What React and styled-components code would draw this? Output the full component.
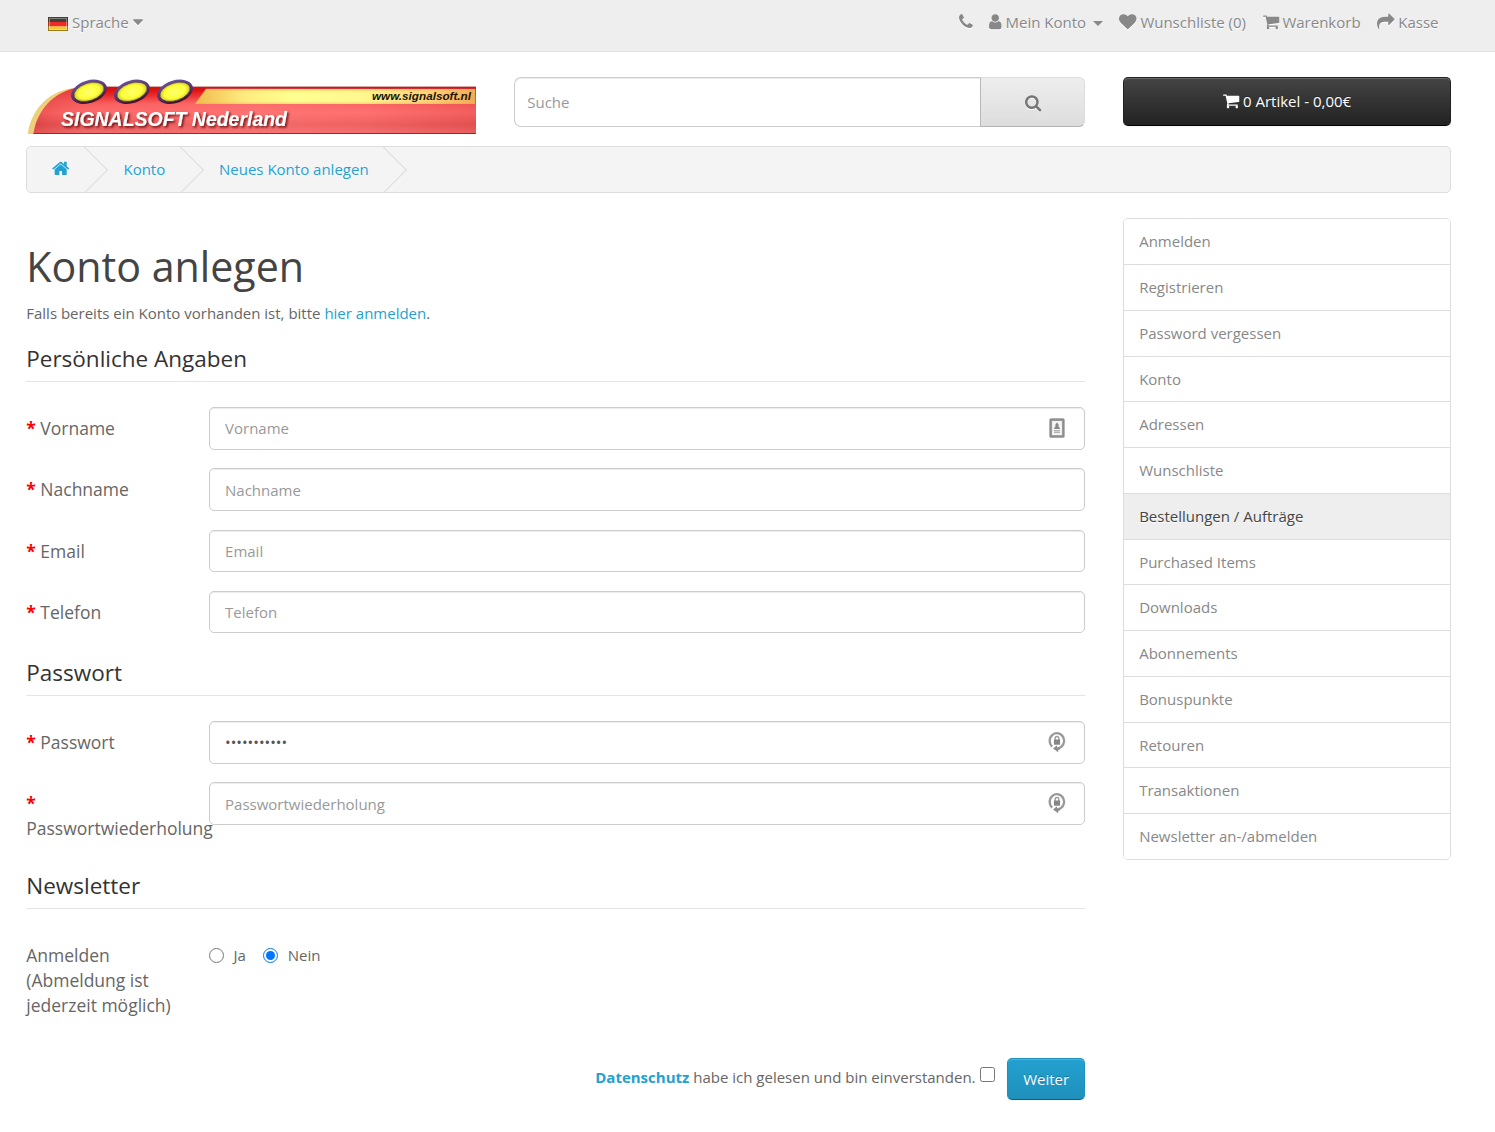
import React, { useState } from "react";
import styled, { createGlobalStyle, css } from "styled-components";

const GlobalStyle = createGlobalStyle`
  * {
    box-sizing: border-box;
  }

  body {
    margin: 0;
    background: #fff;
    color: #666;
    font-family: "Open Sans", sans-serif;
    font-size: 15px;
    line-height: 21.4px;
  }

  a {
    color: #23a1d1;
    text-decoration: none;
  }
`;

/* Glyphs on a 1792 grid: [left edge, advance width, path] */
const glyphs = {
  phone: [192, 1408, "M1600 1240q0 27-10 70.5t-21 68.5q-21 50-122 106-94 51-186 51-27 0-53-3.5t-57.5-12.5-47-14.5-55.5-20.5-49-18q-98-35-175-83-127-79-264-216t-216-264q-48-77-83-175-3-9-18-49t-20.5-55.5-14.5-47-12.5-57.5-3.5-53q0-92 51-186 56-101 106-122 25-11 68.5-21t70.5-10q14 0 21 3 18 6 53 76 11 19 30 54t35 63.5 31 53.5q3 4 17.5 25t21.5 35.5 7 28.5q0 20-28.5 50t-62 55-62 53-28.5 46q0 9 5 22.5t8.5 20.5 14 24 11.5 19q76 137 174 235t235 174q2 1 19 11.5t24 14 20.5 8.5 22.5 5q18 0 46-28.5t53-62 55-62 50-28.5q14 0 28.5 7t35.5 21.5 25 17.5q25 15 53.5 31t63.5 35 54 30q70 35 76 53 3 7 3 21z"],
  user: [256, 1280, "M1536 1399q0 109-62.5 187t-150.5 78h-854q-88 0-150.5-78t-62.5-187q0-85 8.5-160.5t31.5-152 58.5-131 94-89 134.5-34.5q131 128 313 128t313-128q76 0 134.5 34.5t94 89 58.5 131 31.5 152 8.5 160.5zm-256-887q0 159-112.5 271.5t-271.5 112.5-271.5-112.5-112.5-271.5 112.5-271.5 271.5-112.5 271.5 112.5 112.5 271.5z"],
  heart: [0, 1792, "M896 1664q-26 0-44-18l-624-602q-10-8-27.5-26t-55.5-65.5-68-97.5-53.5-121-23.5-138q0-220 127-344t351-124q62 0 126.5 21.5t120 58 95.5 68.5 76 68q36-36 76-68t95.5-68.5 120-58 126.5-21.5q224 0 351 124t127 344q0 221-229 450l-623 600q-18 18-44 18z"],
  cart: [64, 1664, "M704 1536q0 52-38 90t-90 38-90-38-38-90 38-90 90-38 90 38 38 90zm896 0q0 52-38 90t-90 38-90-38-38-90 38-90 90-38 90 38 38 90zm128-1088v512q0 24-16.5 42.5t-40.5 21.5l-1044 122q13 60 13 70 0 16-24 64h920q26 0 45 19t19 45-19 45-45 19h-1024q-26 0-45-19t-19-45q0-11 8-31.5t16-36 21.5-40 15.5-29.5l-177-823h-204q-26 0-45-19t-19-45 19-45 45-19h256q16 0 28.5 6.5t19.5 15.5 13 24.5 8 26 5.5 29.5 4.5 26h1201q26 0 45 19t19 45z"],
  share: [0, 1792, "M1792 640q0 26-19 45l-512 512q-19 19-45 19t-45-19-19-45v-256h-224q-98 0-175.5 6t-154 21.5-133 42.5-105.5 69.5-80 101-48.5 138.5-17.5 181q0 55 5 123 0 6 2.5 23.5t2.5 26.5q0 15-8.5 25t-23.5 10q-16 0-28-17-7-9-13-22t-13.5-30-10.5-24q-127-285-127-451 0-199 53-333 162-403 875-403h224v-256q0-26 19-45t45-19 45 19l512 512q19 19 19 45z"],
  search: [64, 1664, "M1216 832q0-185-131.5-316.5t-316.5-131.5-316.5 131.5-131.5 316.5 131.5 316.5 316.5 131.5 316.5-131.5 131.5-316.5zm512 832q0 52-38 90t-90 38q-54 0-90-38l-343-342q-179 124-399 124-143 0-273.5-55.5t-225-150-150-225-55.5-273.5 55.5-273.5 150-225 225-150 273.5-55.5 273.5 55.5 225 150 150 225 55.5 273.5q0 220-124 399l343 343q37 37 37 90z"],
  home: [64, 1664, "M1472 992v480q0 26-19 45t-45 19h-384v-384h-256v384h-384q-26 0-45-19t-19-45v-480q0-1 .5-3t.5-3l575-474 575 474q1 2 1 6zm223-69l-62 74q-8 9-21 11h-3q-13 0-21-7l-692-577-692 577q-12 8-24 7-13-2-21-11l-62-74q-8-10-7-23.5t11-21.5l719-599q32-26 76-26t76 26l244 204v-195q0-14 9-23t23-9h192q14 0 23 9t9 23v408l219 182q10 8 11 21.5t-7 23.5z"],
  caret: [384, 1024, "M1408 704q0 26-19 45l-448 448q-19 19-45 19t-45-19l-448-448q-19-19-19-45t19-45 45-19h896q26 0 45 19t19 45z"],
};

const Glyph = styled.svg`
  display: block;
  flex: none;
  fill: currentColor;
  overflow: visible;
  filter: ${(p) => (p.$flat ? "none" : "drop-shadow(0 1px 0 #fff)")};
`;

const Icon = ({ name, size = 17.5, flat }) => {
  const [left, advance, path] = glyphs[name];
  return (
    <Glyph
      $flat={flat}
      width={(size * advance) / 1792}
      height={size}
      viewBox={`${left} 0 ${advance} 1792`}
    >
      <path d={path} />
    </Glyph>
  );
};

const TopBar = styled.nav`
  height: 52px;
  background: #eee;
  border-bottom: 1px solid #e2e2e2;
`;

const Container = styled.div`
  width: 1462.5px;
  margin-left: 7.5px;
  padding: 0 18.75px;
`;

const TopInner = styled(Container)`
  display: flex;
  justify-content: space-between;
  padding: 11px 31.5px 0 40.5px;
  line-height: 22px;
  color: #888;
  text-shadow: 0 1px #fff;
`;

const TopLinks = styled.div`
  display: flex;
  gap: 16.6px;
`;

const TopLink = styled.a`
  display: flex;
  align-items: center;
  gap: ${(p) => p.$gap || 3.6}px;
  height: 22px;
  color: #888;
`;

const Flag = styled.svg`
  display: block;
  margin-top: 3px;
`;

const MenuCaret = styled.span`
  margin: 2px 0 0 3px;
  border-top: 5px solid;
  border-left: 5px solid transparent;
  border-right: 5px solid transparent;
`;

const Header = styled(Container)`
  display: flex;
  padding-top: 25px;
  height: 94px;
`;

const LogoBox = styled.div`
  width: 487.5px;
`;

const SearchBox = styled.div`
  display: flex;
  width: 571.4px;
  height: 50px;
`;

const SearchInput = styled.input`
  flex: 1;
  min-width: 0;
  height: 50px;
  padding: 0 12.5px;
  font: 15px "Open Sans", sans-serif;
  color: #555;
  border: 1px solid #ccc;
  border-right: 0;
  border-radius: 7px 0 0 7px;
  box-shadow: inset 0 1px 1px rgba(0, 0, 0, 0.075);
  outline: none;

  &::placeholder {
    color: #999;
  }
`;

const SearchButton = styled.button`
  display: flex;
  align-items: center;
  justify-content: center;
  width: 105px;
  height: 50px;
  padding: 2px 0 0;
  color: #777;
  background: linear-gradient(#eee, #ddd);
  border: 1px solid;
  border-color: #ddd #ddd #b3b3b3 #b8b8b8;
  border-radius: 0 6px 6px 0;
`;

const CartButton = styled.button`
  display: flex;
  align-items: center;
  justify-content: center;
  gap: 3.5px;
  width: 328.1px;
  height: 49px;
  margin-left: 38px;
  padding: 0 0 2px;
  color: #fff;
  font: 15px "Open Sans", sans-serif;
  background: linear-gradient(#444, #222);
  border: 1px solid;
  border-color: #222 #222 #040404;
  border-radius: 5px;
  box-shadow: inset 0 1px 0 rgba(255, 255, 255, 0.2), 0 1px 2px rgba(0, 0, 0, 0.05);
  text-shadow: 0 -1px 0 rgba(0, 0, 0, 0.25);
`;

const Breadcrumb = styled.ul`
  display: flex;
  gap: 3.8px;
  height: 47px;
  margin: 0;
  padding: 0;
  list-style: none;
  overflow: hidden;
  background: #f4f4f4;
  border: 1px solid #ddd;
  border-radius: 5px;
`;

const Crumb = styled.li`
  position: relative;
  display: flex;
  align-items: center;
  padding: 0 25px;
  text-shadow: 0 1px #fff;

  svg {
    margin-bottom: 2px;
  }

  /* Arrow between two crumbs */
  &::after {
    content: "";
    position: absolute;
    top: 6.3px;
    right: -6.5px;
    width: 33px;
    height: 33px;
    border-top: 1px solid #ddd;
    border-right: 1px solid #ddd;
    transform: rotate(45deg);
  }
`;

const Columns = styled.div`
  display: flex;
  gap: 38px;
  padding-top: 25.3px;
`;

const Content = styled.main`
  width: 1058.9px;
`;

const Title = styled.h1`
  margin: 24.9px 0 14px;
  font-size: 41.2px;
  font-weight: 400;
  line-height: 46px;
  color: #444;
`;

const Intro = styled.p`
  margin: 0 0 15.8px;
`;

const Fieldset = styled.fieldset`
  margin: 0;
  padding: 0;
  border: 0;
  height: ${(p) => p.$height}px;
`;

const Legend = styled.div`
  height: 42px;
  margin-bottom: 24.7px;
  padding-top: 3px;
  font-size: 22.5px;
  line-height: 32px;
  color: #333;
  border-bottom: 1px solid #e5e5e5;
`;

const FormGroup = styled.div`
  display: flex;
  height: 42.5px;
  margin-bottom: 18.75px;
`;

const Label = styled.label`
  flex: none;
  width: 182.8px;
  padding: 9px 37px 0 0;
  font-size: 17.5px;
  line-height: 25px;

  ${(p) =>
    p.$required &&
    css`
      &::before {
        content: "* ";
        color: #f00;
        font-weight: 700;
      }
    `}
`;

const Field = styled.div`
  position: relative;
  flex: 1;
`;

const TextInput = styled.input`
  display: block;
  width: 100%;
  height: 42.5px;
  padding: 0 15px;
  font: 15px "Open Sans", sans-serif;
  color: #555;
  background: #fff;
  border: 1px solid #ccc;
  border-radius: 5px;
  box-shadow: inset 0 1px 1px rgba(0, 0, 0, 0.075);
  outline: none;

  &::placeholder {
    color: #999;
  }
`;

const FieldIcon = styled.svg`
  position: absolute;
  top: 10px;
  right: 17px;
`;

const Options = styled.div`
  display: flex;
  align-items: center;
  height: 43px;
`;

const Option = styled.label`
  display: flex;
  align-items: center;
  gap: 9.5px;
  margin-right: 17.4px;
`;

const Radio = styled.input`
  width: 15px;
  height: 15px;
  margin: 0;
`;

const Actions = styled.div`
  display: flex;
  justify-content: flex-end;
  height: 42.5px;
  line-height: 39px;
`;

const Checkbox = styled.input`
  width: 15px;
  height: 15px;
  margin: 9px 12px 0 4.6px;
`;

const SubmitButton = styled.button`
  width: 78px;
  height: 42px;
  padding: 0 0 1.5px;
  color: #fff;
  font: 15px "Open Sans", sans-serif;
  background: linear-gradient(#23a1d1, #1f90bb);
  border: 1px solid;
  border-color: #1f90bb #1f90bb #145e7a;
  border-radius: 5px;
  box-shadow: inset 0 1px 0 rgba(255, 255, 255, 0.2), 0 1px 2px rgba(0, 0, 0, 0.05);
  text-shadow: 0 -1px 0 rgba(0, 0, 0, 0.25);
`;

const Sidebar = styled.aside`
  width: 328.1px;
  height: 642px;
  border: 1px solid #ddd;
  border-radius: 5px;
  overflow: hidden;
`;

const SideLink = styled.a`
  display: block;
  height: 45.77px;
  padding: 12px 15px;
  color: ${(p) => (p.$active ? "#444" : "#888")};
  background: ${(p) => (p.$active ? "#eee" : "#fff")};
  text-shadow: ${(p) => (p.$active ? "0 1px #fff" : "none")};
  border-bottom: 1px solid #ddd;

  &:last-child {
    border-bottom: 0;
  }
`;

const Logo = () => (
  <svg width="450" height="58" viewBox="0 0 450 58">
    <defs>
      <linearGradient id="body" x1="0" y1="0" x2="0" y2="1">
        <stop offset="0" stopColor="#e23030" />
        <stop offset="0.3" stopColor="#f65a5a" />
        <stop offset="0.55" stopColor="#ff6c6c" />
        <stop offset="0.8" stopColor="#e65656" />
        <stop offset="1" stopColor="#f07070" />
      </linearGradient>
      <linearGradient id="glow" x1="0" y1="0" x2="1" y2="0">
        <stop offset="0" stopColor="#c82020" stopOpacity="0.35" />
        <stop offset="0.15" stopColor="#ff7070" stopOpacity="0.1" />
        <stop offset="0.5" stopColor="#ff7a7a" stopOpacity="0.55" />
        <stop offset="0.75" stopColor="#ff7a7a" stopOpacity="0.3" />
        <stop offset="1" stopColor="#d84040" stopOpacity="0.3" />
      </linearGradient>
      <linearGradient id="crimson" x1="0" y1="0" x2="0" y2="1">
        <stop offset="0" stopColor="#e00000" />
        <stop offset="1" stopColor="#e81010" stopOpacity="0" />
      </linearGradient>
      <linearGradient id="gold" x1="0" y1="0" x2="1" y2="0">
        <stop offset="0" stopColor="#f0b94c" />
        <stop offset="0.18" stopColor="#ffec80" />
        <stop offset="0.35" stopColor="#ffff90" />
        <stop offset="0.6" stopColor="#fff890" />
        <stop offset="0.85" stopColor="#ffcf78" />
        <stop offset="1" stopColor="#f5a653" />
      </linearGradient>
      <linearGradient id="goldShade" x1="0" y1="0" x2="0" y2="1">
        <stop offset="0" stopColor="#f0a840" stopOpacity="0.45" />
        <stop offset="0.3" stopColor="#ffe070" stopOpacity="0" />
        <stop offset="0.75" stopColor="#ffe070" stopOpacity="0" />
        <stop offset="1" stopColor="#d8a040" stopOpacity="0.4" />
      </linearGradient>
      <linearGradient id="rim" x1="0" y1="0" x2="0" y2="1">
        <stop offset="0" stopColor="#6a50a0" />
        <stop offset="0.6" stopColor="#55306a" />
        <stop offset="1" stopColor="#401020" />
      </linearGradient>
      <radialGradient id="lamp">
        <stop offset="0" stopColor="#ffff70" />
        <stop offset="0.7" stopColor="#ffff38" />
        <stop offset="1" stopColor="#cfc638" />
      </radialGradient>
      <filter id="shadow" x="-10%" y="-10%" width="120%" height="150%">
        <feDropShadow dx="1.6" dy="1.6" stdDeviation="0.9" floodColor="#500" floodOpacity="0.85" />
      </filter>
    </defs>
    <path d="M1.8 57C4 36 20 14 48 11L60 16L16 57Z" fill="#edcf7c" />
    <path d="M7.5 57C10 36 26 13 56 10H450V57Z" fill="url(#body)" />
    <path d="M7.5 57C10 36 26 13 56 10H450V57Z" fill="url(#glow)" />
    <path d="M52 10H181L169 27H60Z" fill="url(#crimson)" />
    <path d="M52 9.5H450" stroke="#d09090" strokeWidth="0.8" />
    <path d="M52 10.8H450" stroke="#cc1818" strokeWidth="1.6" />
    <path d="M7.5 56.5H450" stroke="#c01818" strokeWidth="1.2" />
    <path d="M180 12H449V27H169Z" fill="url(#gold)" />
    <path d="M180 12H449V27H169Z" fill="url(#goldShade)" />
    {[63, 106, 149].map((x) => (
      <g key={x} transform={`translate(${x} 14.8) rotate(-18)`}>
        <ellipse rx="18.5" ry="11.3" fill="url(#rim)" />
        <ellipse rx="15.6" ry="8.8" fill="url(#lamp)" stroke="#4a3440" strokeWidth="0.6" />
      </g>
    ))}
    <text
      x="35"
      y="49"
      textLength="226"
      lengthAdjust="spacingAndGlyphs"
      fill="#fff"
      filter="url(#shadow)"
      fontFamily="Liberation Sans, sans-serif"
      fontSize="19.6"
      fontWeight="700"
      fontStyle="italic"
    >
      SIGNALSOFT Nederland
    </text>
    <text
      x="346"
      y="23"
      textLength="99"
      lengthAdjust="spacingAndGlyphs"
      fill="#181408"
      fontFamily="Liberation Sans, sans-serif"
      fontSize="11.5"
      fontWeight="700"
      fontStyle="italic"
    >
      www.signalsoft.nl
    </text>
  </svg>
);

const ContactIcon = () => (
  <FieldIcon width="22" height="22" viewBox="0 0 22 22">
    <rect x="4.6" y="2.6" width="12.8" height="17" fill="#f4f4f4" stroke="#b5b5b5" strokeWidth="3" rx="1" />
    <rect x="4.8" y="2.8" width="12.4" height="16.6" fill="none" stroke="#8e8e8e" strokeWidth="1.8" />
    <path d="M11 5.5l1.6 2v2.2l1.2 1v1.4H8.2v-1.4l1.2-1V7.5z" fill="#888" />
    <path d="M8 13.6h6M8 15.4h6" stroke="#b0b0b0" strokeWidth="1.3" />
  </FieldIcon>
);

const LockIcon = () => (
  <FieldIcon width="22" height="22" viewBox="0 0 22 22">
    <path d="M6.2 15.6A7.2 7.6 0 1 1 12.6 17.2" fill="none" stroke="#999" strokeWidth="2.3" />
    <path d="M7 17.4l4-3.2v2h2.8v2.6h-1.6v2.4z" fill="#8c8c8c" />
    <path d="M9.1 9V7.5a1.9 2 0 0 1 3.8 0V9" fill="none" stroke="#999" strokeWidth="1.3" />
    <rect x="7.9" y="8.5" width="6.2" height="5.2" fill="#868686" />
  </FieldIcon>
);

const TextField = ({ label, type = "text", icon, defaultValue }) => (
  <FormGroup>
    <Label $required>{label}</Label>
    <Field>
      <TextInput type={type} placeholder={label} defaultValue={defaultValue} />
      {icon}
    </Field>
  </FormGroup>
);

const sideLinks = [
  "Anmelden",
  "Registrieren",
  "Password vergessen",
  "Konto",
  "Adressen",
  "Wunschliste",
  "Bestellungen / Aufträge",
  "Purchased Items",
  "Downloads",
  "Abonnements",
  "Bonuspunkte",
  "Retouren",
  "Transaktionen",
  "Newsletter an-/abmelden",
];

const App = () => {
  const [newsletter, setNewsletter] = useState(false);

  return (
    <>
      <GlobalStyle />
      <TopBar>
        <TopInner>
          <TopLink $gap={4}>
            <Flag width="20" height="14" viewBox="0 0 20 14">
              <rect width="20" height="5" fill="#404038" />
              <rect y="5" width="20" height="4.5" fill="#ee2a2a" />
              <rect y="9.5" width="20" height="4.5" fill="#f0c828" />
              <rect x="1.5" y="1.5" width="17" height="11" fill="none" stroke="#fff" strokeOpacity="0.35" />
              <rect x="0.5" y="0.5" width="19" height="13" fill="none" stroke="#5a3a10" strokeOpacity="0.55" />
            </Flag>
            Sprache
            <Icon name="caret" />
          </TopLink>
          <TopLinks>
            <TopLink>
              <Icon name="phone" />
            </TopLink>
            <TopLink>
              <Icon name="user" />
              Mein Konto
              <MenuCaret />
            </TopLink>
            <TopLink>
              <Icon name="heart" />
              Wunschliste (0)
            </TopLink>
            <TopLink>
              <Icon name="cart" />
              Warenkorb
            </TopLink>
            <TopLink>
              <Icon name="share" />
              Kasse
            </TopLink>
          </TopLinks>
        </TopInner>
      </TopBar>

      <Header>
        <LogoBox>
          <Logo />
        </LogoBox>
        <SearchBox>
          <SearchInput placeholder="Suche" />
          <SearchButton>
            <Icon name="search" />
          </SearchButton>
        </SearchBox>
        <CartButton>
          <Icon name="cart" flat />
          0 Artikel - 0,00€
        </CartButton>
      </Header>

      <Container>
        <Breadcrumb>
          <Crumb>
            <a href="#">
              <Icon name="home" size={18.75} />
            </a>
          </Crumb>
          <Crumb>
            <a href="#">Konto</a>
          </Crumb>
          <Crumb>
            <a href="#">Neues Konto anlegen</a>
          </Crumb>
        </Breadcrumb>

        <Columns>
          <Content>
            <Title>Konto anlegen</Title>
            <Intro>
              Falls bereits ein Konto vorhanden ist, bitte <a href="#">hier anmelden</a>.
            </Intro>

            <Fieldset $height={314}>
              <Legend>Persönliche Angaben</Legend>
              <TextField label="Vorname" icon={<ContactIcon />} />
              <TextField label="Nachname" />
              <TextField label="Email" />
              <TextField label="Telefon" />
            </Fieldset>

            <Fieldset $height={213}>
              <Legend>Passwort</Legend>
              <TextField label="Passwort" type="password" defaultValue="signalsoft1" icon={<LockIcon />} />
              <TextField label="Passwortwiederholung" type="password" icon={<LockIcon />} />
            </Fieldset>

            <Fieldset $height={191}>
              <Legend>Newsletter</Legend>
              <FormGroup>
                <Label>Anmelden (Abmeldung ist jederzeit möglich)</Label>
                <Options>
                  <Option>
                    <Radio type="radio" checked={newsletter} onChange={() => setNewsletter(true)} />
                    Ja
                  </Option>
                  <Option>
                    <Radio type="radio" checked={!newsletter} onChange={() => setNewsletter(false)} />
                    Nein
                  </Option>
                </Options>
              </FormGroup>
            </Fieldset>

            <Actions>
              <span>
                <a href="#">
                  <b>Datenschutz</b>
                </a>{" "}
                habe ich gelesen und bin einverstanden.
              </span>
              <Checkbox type="checkbox" />
              <SubmitButton>Weiter</SubmitButton>
            </Actions>
          </Content>

          <Sidebar>
            {sideLinks.map((name) => (
              <SideLink key={name} href="#" $active={name === "Bestellungen / Aufträge"}>
                {name}
              </SideLink>
            ))}
          </Sidebar>
        </Columns>
      </Container>
    </>
  );
};

export default App;
